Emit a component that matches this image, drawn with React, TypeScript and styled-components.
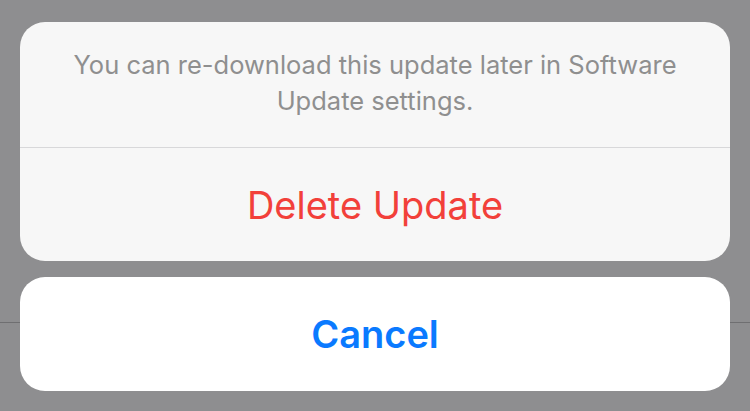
import React from 'react';
import styled, { createGlobalStyle } from 'styled-components';

const GlobalStyle = createGlobalStyle`
  html, body {
    margin: 0;
    padding: 0;
    background: #8e8e90;
  }
  body {
    font-family: Inter, "Noto Sans", "Liberation Sans", sans-serif;
    -webkit-font-smoothing: antialiased;
  }
`;

const Screen = styled.div`
  position: relative;
  width: 750px;
  height: 411px;
  overflow: hidden;
  background: #8e8e90;
`;

// hairline of the page underneath, showing through at the sheet's sides
const BackdropRule = styled.div`
  position: absolute;
  left: 0;
  right: 0;
  top: 322px;
  height: 1px;
  background: #6f6f71;
`;

const Sheet = styled.div`
  position: relative;
  display: flex;
  flex-direction: column;
  gap: 16px;
  padding: 22px 20px 0;
`;

const Group = styled.div<{ $solid?: boolean }>`
  display: flex;
  flex-direction: column;
  border-radius: 25px;
  overflow: hidden;
  background: ${(p) => (p.$solid ? '#ffffff' : '#f7f7f7')};
`;

const Message = styled.div`
  height: 126px;
  box-sizing: border-box;
  padding: 25px 40px 0;
  text-align: center;
  font-size: 25.5px;
  line-height: 36px;
  color: #8f8f8f;
  border-bottom: 1px solid #d8d8da;
`;

const Action = styled.button<{ $tone: 'destructive' | 'cancel' }>`
  height: ${(p) => (p.$tone === 'cancel' ? '114px' : '113px')};
  border: 0;
  background: transparent;
  font-family: inherit;
  font-size: 38px;
  font-weight: ${(p) => (p.$tone === 'cancel' ? 600 : 400)};
  color: ${(p) => (p.$tone === 'cancel' ? '#0a7aff' : '#f2403a')};
  cursor: pointer;
`;

export default function App() {
  return (
    <Screen>
      <GlobalStyle />
      <BackdropRule />
      <Sheet>
        <Group>
          <Message>
            You can re-download this update later in Software Update settings.
          </Message>
          <Action $tone="destructive">Delete Update</Action>
        </Group>
        <Group $solid>
          <Action $tone="cancel">Cancel</Action>
        </Group>
      </Sheet>
    </Screen>
  );
}
